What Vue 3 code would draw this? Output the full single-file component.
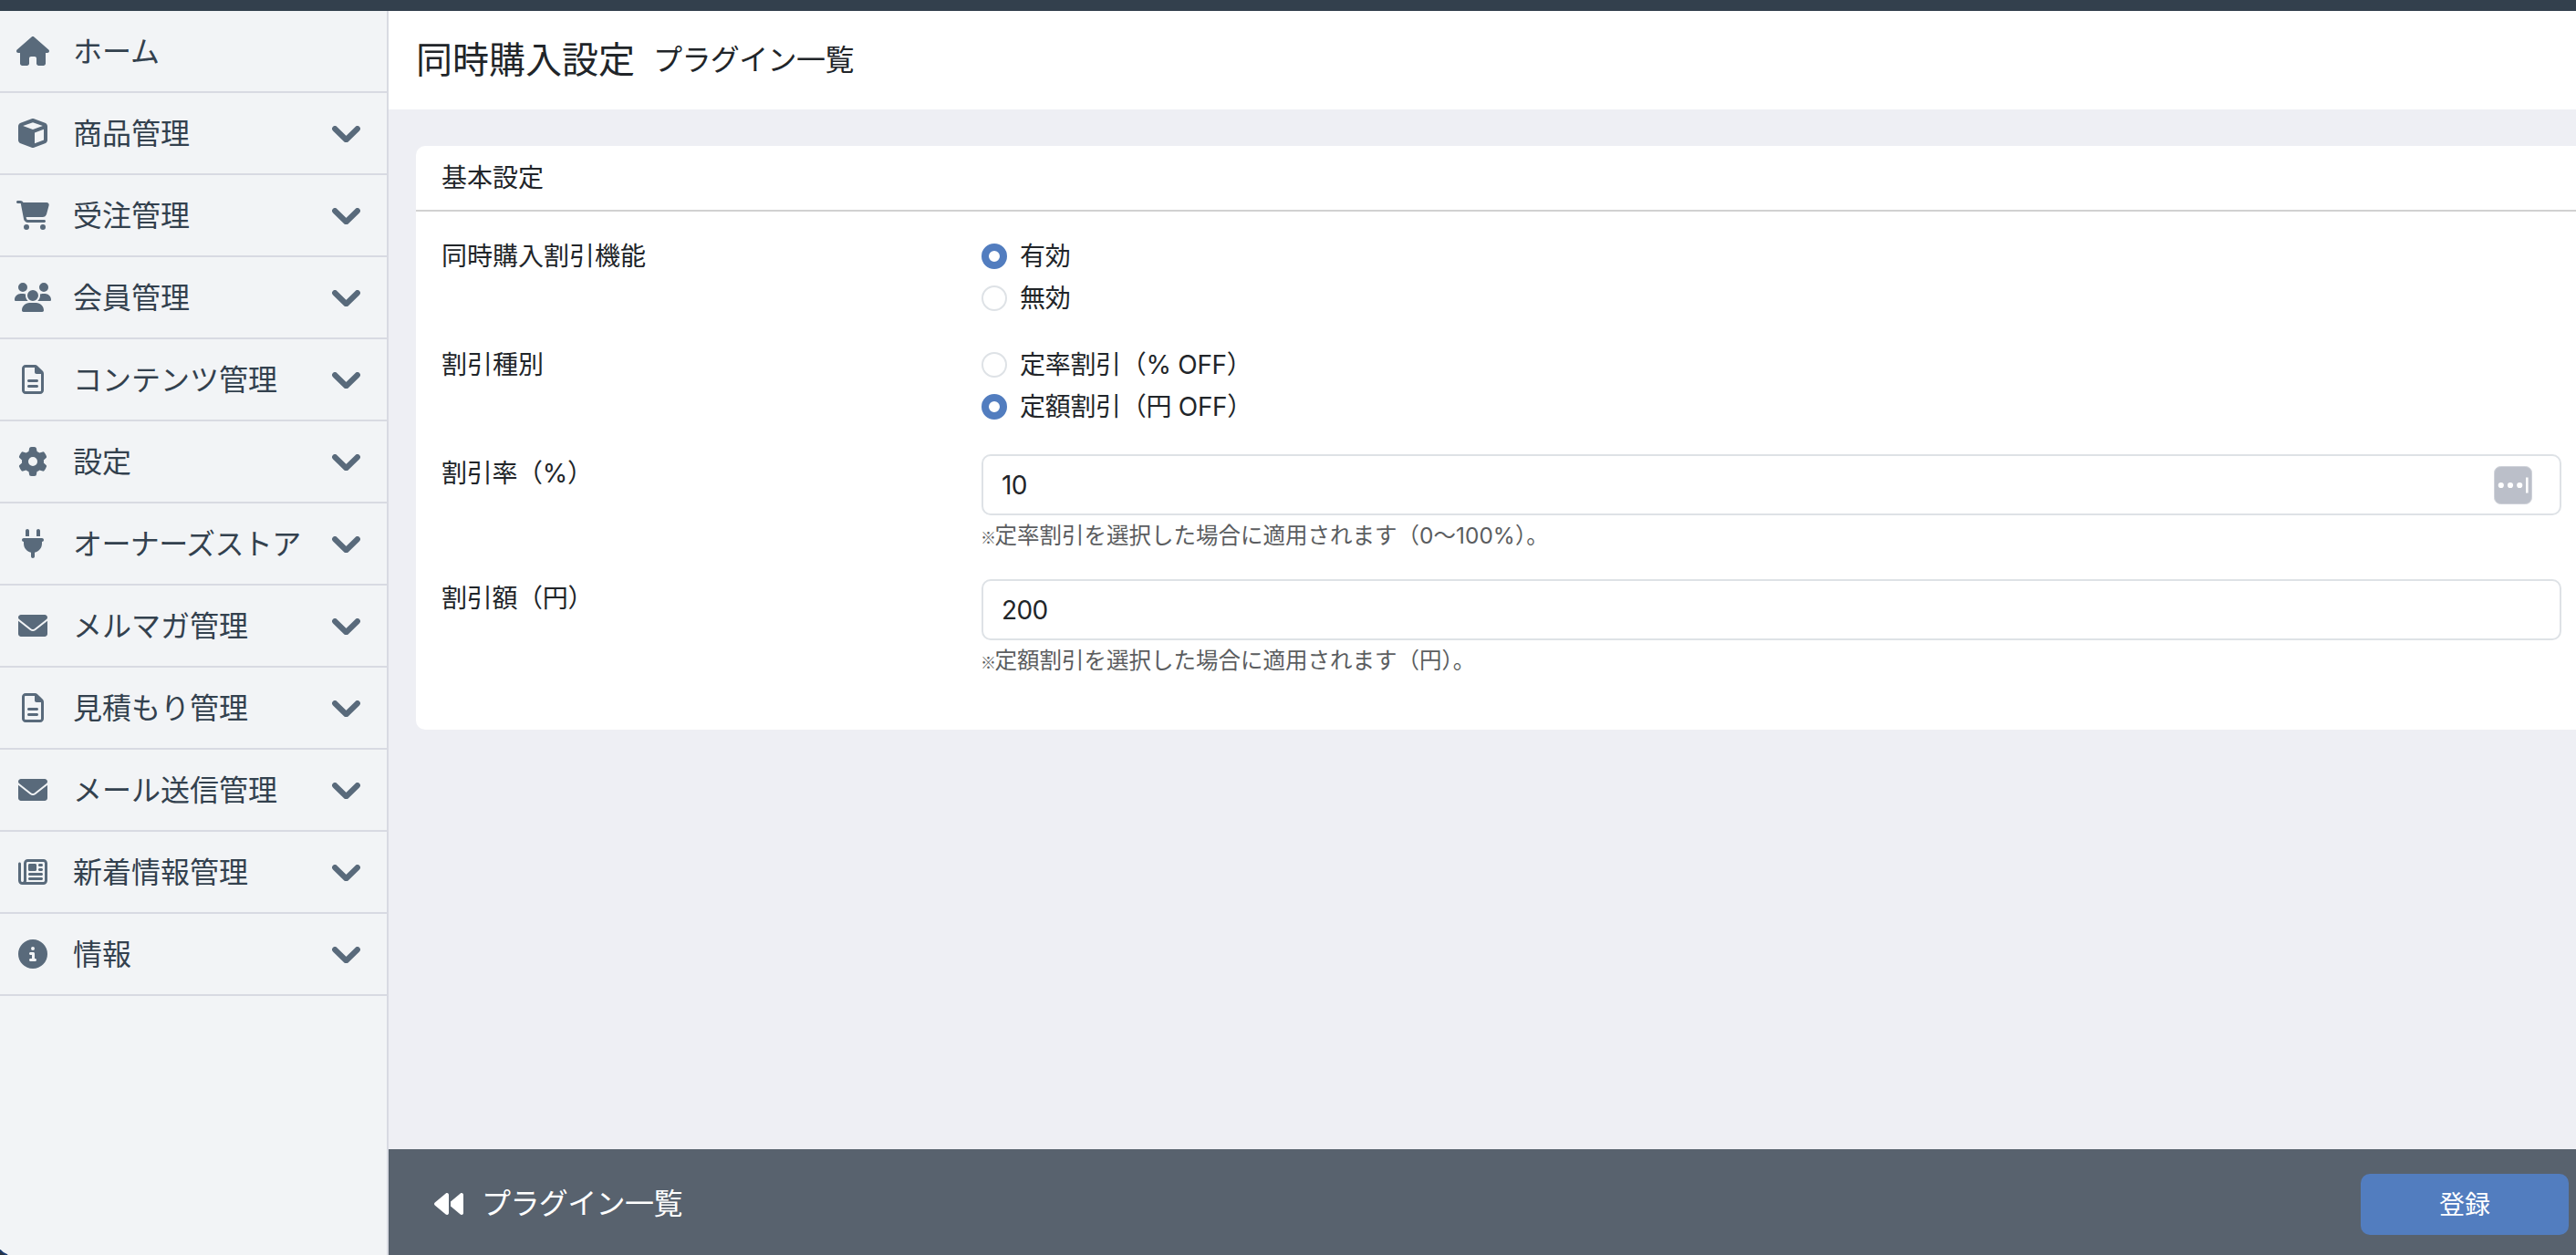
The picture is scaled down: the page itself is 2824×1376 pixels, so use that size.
<template>
  <div class="admin">
    <div class="topbar"></div>
    <div class="wrapper">
      <nav class="sidebar">
        <a v-for="item in menu" :key="item.label" class="nav-item">
          <span class="nav-icon">
            <svg :viewBox="`0 0 ${icons[item.icon].w} 512`" height="32" :width="icons[item.icon].w / 16">
              <path :d="icons[item.icon].d" />
            </svg>
          </span>
          <span class="nav-label" :class="{ tight: item.tight }">{{ item.label }}</span>
          <svg v-if="item.children" class="chevron" viewBox="0 0 31 18.4">
            <path d="M3.200 3.200L15.500 15.200L27.800 3.200" />
          </svg>
        </a>
        <svg class="corner" viewBox="0 0 9 6">
          <path class="corner-fill" d="M0 0C2 2.6 5 4.8 9 6H0z" />
          <path class="corner-edge" d="M0 .5C2 3 4.500 4.800 8 6" />
        </svg>
      </nav>

      <main class="main">
        <header class="page-title">
          <h1>同時購入設定</h1>
          <span class="sub-title">プラグイン一覧</span>
        </header>

        <section class="content">
          <div class="card">
            <div class="card-header">基本設定</div>
            <div class="card-body">
              <div v-for="group in radioGroups" :key="group.name" class="row">
                <div class="label">{{ group.label }}</div>
                <div class="field">
                  <label v-for="option in group.options" :key="option.value" class="form-check">
                    <input v-model="form[group.name]" type="radio" :name="group.name" :value="option.value" />
                    <span>{{ option.label }}</span>
                  </label>
                </div>
              </div>

              <div v-for="field in textFields" :key="field.name" class="row row-text">
                <div class="label">{{ field.label }}</div>
                <div class="field">
                  <div class="input-wrap">
                    <input v-model="form[field.name]" type="text" class="form-control" />
                    <svg v-if="field.autofill" class="autofill" viewBox="0 0 42 42">
                      <rect x=".5" y=".5" width="41" height="41" rx="7" />
                      <circle cx="7.800" cy="21" r="3.100" />
                      <circle cx="18" cy="21" r="3.100" />
                      <circle cx="28.200" cy="21" r="3.100" />
                      <path d="M35 12.500h2.600v17H35z" />
                    </svg>
                  </div>
                  <p class="help"><span class="mark">※</span>{{ field.help }}</p>
                </div>
              </div>
            </div>
          </div>
        </section>

        <footer class="conversion">
          <a class="back">
            <svg width="32" height="32" viewBox="0 0 512 512">
              <path d="M459.5 440.6c9.5 7.9 22.8 9.7 34.1 4.4s18.4-16.6 18.4-29V96c0-12.4-7.2-23.7-18.4-29s-24.5-3.600-34.1 4.400L288 214.300V297.700L459.5 440.6zM256 352V96c0-12.4-7.2-23.7-18.4-29s-24.5-3.600-34.1 4.400l-192 160C4.200 237.500 0 246.500 0 256s4.200 18.500 11.500 24.600l192 160c9.500 7.900 22.800 9.700 34.100 4.400s18.400-16.600 18.400-29V352z" />
            </svg>
            <span class="sub-title">プラグイン一覧</span>
          </a>
          <button type="button" class="btn">登録</button>
        </footer>
      </main>
    </div>
  </div>
</template>

<script setup>
import { reactive } from 'vue'

const icons = {
  home: {
    w: 576,
    d: 'M575.8 255.5c0 18-15 32.1-32 32.1h-32l.7 160.2c0 2.7-.2 5.4-.5 8.1V472c0 22.1-17.9 40-40 40H456c-1.1 0-2.2 0-3.3-.1c-1.4 .1-2.8 .1-4.2 .1H416 392c-22.1 0-40-17.9-40-40V448 384c0-17.7-14.3-32-32-32H256c-17.7 0-32 14.3-32 32v64 24c0 22.1-17.9 40-40 40H160 128.1c-1.5 0-3-.1-4.5-.2c-1.2 .1-2.4 .2-3.6 .2H104c-22.1 0-40-17.9-40-40V360c0-.9 0-1.9 .1-2.8V287.6H32c-18 0-32-14-32-32.1c0-9 3-17 10-24L266.4 8c7-7 15-8 22-8s15 2 21 7L564.8 231.5c8 7 12 15 11 24z'
  },
  cube: {
    w: 512,
    d: 'M234.5 5.7c13.9-5 29.1-5 43.1 0l192 68.6C495 83.4 512 107.5 512 134.6V377.4c0 27-17 51.2-42.5 60.3l-192 68.6c-13.9 5-29.1 5-43.1 0l-192-68.6C17 428.6 0 404.5 0 377.4V134.6c0-27 17-51.2 42.5-60.3l192-68.6zM256 66L82.3 128 256 190l173.7-62L256 66zm32 368.6l160-57.1v-188L288 246.6v188z'
  },
  cart: {
    w: 576,
    d: 'M0 24C0 10.7 10.7 0 24 0H69.5c22 0 41.5 12.8 50.6 32h411c26.3 0 45.5 25 38.6 50.4l-41 152.3c-8.5 31.4-37 53.3-69.5 53.3H170.7l5.4 28.5c2.2 11.3 12.1 19.5 23.6 19.5H488c13.3 0 24 10.7 24 24s-10.7 24-24 24H199.7c-34.6 0-64.3-24.6-70.7-58.5L77.4 54.5c-.7-3.8-4-6.5-7.9-6.5H24C10.7 48 0 37.3 0 24zM128 464a48 48 0 1 1 96 0 48 48 0 1 1 -96 0zm336-48a48 48 0 1 1 0 96 48 48 0 1 1 0-96z'
  },
  users: {
    w: 640,
    d: 'M144 0a80 80 0 1 1 0 160A80 80 0 1 1 144 0zM512 0a80 80 0 1 1 0 160A80 80 0 1 1 512 0zM0 298.7C0 239.8 47.8 192 106.7 192h42.7c15.9 0 31 3.5 44.6 9.7c-1.3 7.2-1.9 14.7-1.9 22.3c0 38.2 16.8 72.5 43.3 96c-.2 0-.4 0-.7 0H21.3C9.6 320 0 310.4 0 298.7zM405.3 320c-.2 0-.4 0-.7 0c26.6-23.5 43.3-57.8 43.3-96c0-7.6-.7-15-1.9-22.3c13.6-6.3 28.7-9.7 44.6-9.7h42.7C592.2 192 640 239.8 640 298.7c0 11.8-9.6 21.3-21.3 21.3H405.3zM224 224a96 96 0 1 1 192 0 96 96 0 1 1 -192 0zM128 485.3C128 411.7 187.7 352 261.3 352H378.7C452.3 352 512 411.7 512 485.3c0 14.7-11.9 26.7-26.7 26.7H154.7c-14.7 0-26.7-11.9-26.7-26.7z'
  },
  file: {
    w: 384,
    d: 'M64 464c-8.8 0-16-7.2-16-16V64c0-8.8 7.2-16 16-16H224v80c0 17.7 14.3 32 32 32h80V448c0 8.8-7.2 16-16 16H64zM64 0C28.7 0 0 28.7 0 64V448c0 35.3 28.7 64 64 64H320c35.3 0 64-28.7 64-64V154.5c0-17-6.7-33.3-18.7-45.3L274.7 18.7C262.7 6.7 246.5 0 229.5 0H64zm56 256c-13.3 0-24 10.7-24 24s10.7 24 24 24H264c13.3 0 24-10.7 24-24s-10.7-24-24-24H120zm0 96c-13.3 0-24 10.7-24 24s10.7 24 24 24H264c13.3 0 24-10.7 24-24s-10.7-24-24-24H120z'
  },
  cog: {
    w: 512,
    d: 'M495.9 166.6c3.2 8.7 .5 18.4-6.4 24.6l-43.3 39.4c1.1 8.3 1.7 16.8 1.7 25.4s-.6 17.1-1.7 25.4l43.3 39.4c6.9 6.2 9.6 15.9 6.4 24.6c-4.4 11.9-9.7 23.3-15.8 34.3l-4.7 8.1c-6.6 11-14 21.4-22.1 31.2c-5.9 7.2-15.7 9.6-24.5 6.8l-55.7-17.7c-13.4 10.3-28.2 18.9-44 25.4l-12.5 57.1c-2 9.1-9 16.3-18.2 17.8c-13.8 2.3-28 3.5-42.5 3.5s-28.7-1.2-42.5-3.5c-9.2-1.5-16.2-8.7-18.2-17.8l-12.5-57.1c-15.8-6.5-30.6-15.1-44-25.4L83.1 425.9c-8.8 2.8-18.6 .3-24.5-6.8c-8.1-9.8-15.5-20.2-22.1-31.2l-4.7-8.1c-6.1-11-11.4-22.4-15.8-34.3c-3.2-8.7-.5-18.4 6.4-24.6l43.3-39.4C64.6 273.1 64 264.6 64 256s.6-17.1 1.7-25.4L22.4 191.2c-6.9-6.2-9.6-15.9-6.4-24.6c4.4-11.9 9.7-23.3 15.8-34.3l4.7-8.1c6.6-11 14-21.4 22.1-31.2c5.9-7.2 15.7-9.6 24.5-6.8l55.7 17.7c13.4-10.3 28.2-18.9 44-25.4l12.5-57.1c2-9.1 9-16.3 18.2-17.8C227.3 1.2 241.5 0 256 0s28.7 1.2 42.5 3.5c9.2 1.5 16.2 8.7 18.2 17.8l12.5 57.1c15.8 6.5 30.6 15.1 44 25.4l55.7-17.7c8.8-2.8 18.6-.3 24.5 6.8c8.1 9.8 15.5 20.2 22.1 31.2l4.7 8.1c6.1 11 11.4 22.4 15.8 34.3zM256 336a80 80 0 1 0 0-160 80 80 0 1 0 0 160z'
  },
  plug: {
    w: 384,
    d: 'M96 0C78.3 0 64 14.3 64 32v96h64V32c0-17.7-14.3-32-32-32zM288 0c-17.7 0-32 14.3-32 32v96h64V32c0-17.7-14.3-32-32-32zM32 160c-17.7 0-32 14.3-32 32s14.3 32 32 32v32c0 77.4 55 142 128 156.8V480c0 17.7 14.3 32 32 32s32-14.3 32-32V412.8C297 398 352 333.4 352 256V224c17.7 0 32-14.3 32-32s-14.3-32-32-32H32z'
  },
  envelope: {
    w: 512,
    d: 'M256 352c-16.53 0-33.06-5.422-47.16-16.41L0 173.2V400C0 426.5 21.49 448 48 448h416c26.51 0 48-21.49 48-48V173.2l-208.8 162.5C289.1 346.6 272.5 352 256 352zM16.29 145.3l212.2 165.1c16.19 12.6 38.87 12.6 55.06 0l212.2-165.1C505.1 137.3 512 125 512 112C512 85.49 490.5 64 464 64h-416C21.49 64 0 85.49 0 112C0 125 6.01 137.3 16.29 145.3z'
  },
  newspaper: {
    w: 512,
    d: 'M168 80c-13.3 0-24 10.7-24 24V408c0 8.4-1.4 16.5-4.1 24H440c13.3 0 24-10.7 24-24V104c0-13.3-10.7-24-24-24H168zM72 480c-39.8 0-72-32.2-72-72V112C0 98.7 10.7 88 24 88s24 10.7 24 24V408c0 13.3 10.7 24 24 24s24-10.7 24-24V104c0-39.8 32.2-72 72-72H440c39.8 0 72 32.2 72 72V408c0 39.8-32.2 72-72 72H72zM176 136c0-13.3 10.7-24 24-24h96c13.3 0 24 10.7 24 24v80c0 13.3-10.7 24-24 24H200c-13.3 0-24-10.7-24-24V136zm200-24h32c13.3 0 24 10.7 24 24s-10.7 24-24 24H376c-13.3 0-24-10.7-24-24s10.7-24 24-24zm0 80h32c13.3 0 24 10.7 24 24s-10.7 24-24 24H376c-13.3 0-24-10.7-24-24s10.7-24 24-24zM200 272H408c13.3 0 24 10.7 24 24s-10.7 24-24 24H200c-13.3 0-24-10.7-24-24s10.7-24 24-24zm0 80H408c13.3 0 24 10.7 24 24s-10.7 24-24 24H200c-13.3 0-24-10.7-24-24s10.7-24 24-24z'
  },
  info: {
    w: 512,
    d: 'M256 512A256 256 0 1 0 256 0a256 256 0 1 0 0 512zM216 336h24V272H216c-13.3 0-24-10.7-24-24s10.7-24 24-24h48c13.3 0 24 10.7 24 24v88h8c13.3 0 24 10.7 24 24s-10.7 24-24 24H216c-13.3 0-24-10.7-24-24s10.7-24 24-24zm40-208a32 32 0 1 1 0 64 32 32 0 1 1 0-64z'
  }
}

const menu = [
  { label: 'ホーム', icon: 'home', children: false },
  { label: '商品管理', icon: 'cube', children: true },
  { label: '受注管理', icon: 'cart', children: true },
  { label: '会員管理', icon: 'users', children: true },
  { label: 'コンテンツ管理', icon: 'file', children: true },
  { label: '設定', icon: 'cog', children: true },
  { label: 'オーナーズストア', icon: 'plug', children: true, tight: true },
  { label: 'メルマガ管理', icon: 'envelope', children: true },
  { label: '見積もり管理', icon: 'file', children: true },
  { label: 'メール送信管理', icon: 'envelope', children: true },
  { label: '新着情報管理', icon: 'newspaper', children: true },
  { label: '情報', icon: 'info', children: true }
]

const radioGroups = [
  {
    name: 'enabled',
    label: '同時購入割引機能',
    options: [
      { value: '1', label: '有効' },
      { value: '0', label: '無効' }
    ]
  },
  {
    name: 'type',
    label: '割引種別',
    options: [
      { value: 'rate', label: '定率割引（% OFF）' },
      { value: 'amount', label: '定額割引（円 OFF）' }
    ]
  }
]

const textFields = [
  {
    name: 'rate',
    label: '割引率（%）',
    help: '定率割引を選択した場合に適用されます（0〜100%）。',
    autofill: true
  },
  {
    name: 'amount',
    label: '割引額（円）',
    help: '定額割引を選択した場合に適用されます（円）。',
    autofill: false
  }
]

const form = reactive({
  enabled: '1',
  type: 'amount',
  rate: '10',
  amount: '200'
})
</script>

<style>
body {
  margin: 0;
  overflow: hidden;
}
</style>

<style scoped>
.admin {
  display: flex;
  flex-direction: column;
  height: 100vh;
  font-family: Inter, 'Noto Sans CJK JP', sans-serif;
  font-size: 28px;
  line-height: 42px;
  color: #212529;
  background: #eeeff4;
}

.topbar {
  flex: none;
  height: 12px;
  background: #33404d;
}

.wrapper {
  display: flex;
  flex: 1;
  min-height: 0;
}

/* Sidebar */
.sidebar {
  position: relative;
  flex: none;
  width: 424px;
  border-right: 2px solid #d8dae2;
  background: #f2f4f6;
}

.nav-item {
  display: flex;
  align-items: center;
  height: 88px;
  border-bottom: 2px solid #d8dae2;
  color: #33414e;
  font-size: 32px;
  line-height: 48px;
  white-space: nowrap;
}

.nav-icon {
  display: flex;
  justify-content: center;
  width: 72px;
  margin-right: 8px;
}

.nav-icon svg {
  display: block;
  fill: #596a7b;
}

.nav-label {
  flex: 1;
  padding-top: 1px;
}

.nav-label.tight {
  letter-spacing: -0.6px;
}

.chevron {
  width: 31px;
  height: 18.4px;
  margin: 2px 29px 0 0;
  fill: none;
  stroke: #596a7b;
  stroke-width: 6.2;
  stroke-linecap: round;
  stroke-linejoin: round;
}

.corner {
  position: absolute;
  left: 0;
  bottom: 0;
  width: 9px;
  height: 6px;
}

.corner-fill {
  fill: #2b3440;
}

.corner-edge {
  fill: none;
  stroke: #1c3f77;
  stroke-width: 1.5;
}

/* Main */
.main {
  display: flex;
  flex: 1;
  flex-direction: column;
  min-width: 0;
}

.page-title {
  display: flex;
  flex: none;
  align-items: center;
  gap: 20px;
  height: 108px;
  padding-left: 30px;
  background: #fff;
}

h1 {
  margin: 0;
  font-size: 40px;
  font-weight: 400;
  line-height: 48px;
}

.sub-title {
  font-size: 32px;
  line-height: 48px;
  letter-spacing: -0.6px;
}

.content {
  flex: 1;
  padding: 40px 0 0 30px;
}

.card {
  height: 640px;
  border-radius: 10px 0 0 10px;
  background: #fff;
}

.card-header {
  height: 70px;
  padding-left: 28px;
  border-bottom: 2px solid #d1d1d1;
  line-height: 70px;
}

.card-body {
  padding: 28px 16px 0 28px;
}

.row {
  display: grid;
  grid-template-columns: 592px 1fr;
  height: 119px;
}

.row-text {
  height: 137px;
}

.row-text .label {
  letter-spacing: -0.3px;
}

.form-check {
  display: flex;
  align-items: center;
  gap: 14px;
  height: 42px;
  margin-bottom: 4px;
  letter-spacing: -0.3px;
}

.form-check input {
  appearance: none;
  box-sizing: border-box;
  width: 28px;
  height: 28px;
  margin: 0;
  border: 2px solid #dee2e6;
  border-radius: 50%;
  background: #fff;
}

.form-check input:checked {
  border: 8px solid #527dbf;
}

.input-wrap {
  position: relative;
}

.form-control {
  display: block;
  box-sizing: border-box;
  width: 100%;
  height: 67px;
  padding: 0 20px;
  border: 2px solid #dee2e6;
  border-radius: 10px;
  background: #fff;
  color: #212529;
  font: inherit;
  letter-spacing: -0.6px;
}

.autofill {
  position: absolute;
  top: 13px;
  right: 32px;
  width: 42px;
  height: 42px;
  fill: #fff;
}

.autofill rect {
  fill: #bbbfc9;
  stroke: #cfd2d9;
}

.help {
  margin: 4px 0 0;
  color: #5b5d60;
  font-size: 24.5px;
  line-height: 37px;
}

.mark {
  margin: 0 -1.5px 0 -1px;
  font-family: 'Noto Sans CJK JP', sans-serif;
  font-size: 17px;
  line-height: 1;
}

/* Footer bar */
.conversion {
  display: flex;
  flex: none;
  align-items: center;
  justify-content: space-between;
  box-sizing: border-box;
  height: 116px;
  padding: 0 8px 0 50px;
  background: #58626e;
}

.back {
  display: flex;
  align-items: center;
  gap: 20px;
  margin-top: 4px;
  color: #fff;
  fill: #fff;
}

.btn {
  width: 228px;
  height: 67px;
  margin-top: 5px;
  padding: 0;
  border: 0;
  border-radius: 10px;
  background: #527dbf;
  color: #fff;
  font: inherit;
}
</style>
